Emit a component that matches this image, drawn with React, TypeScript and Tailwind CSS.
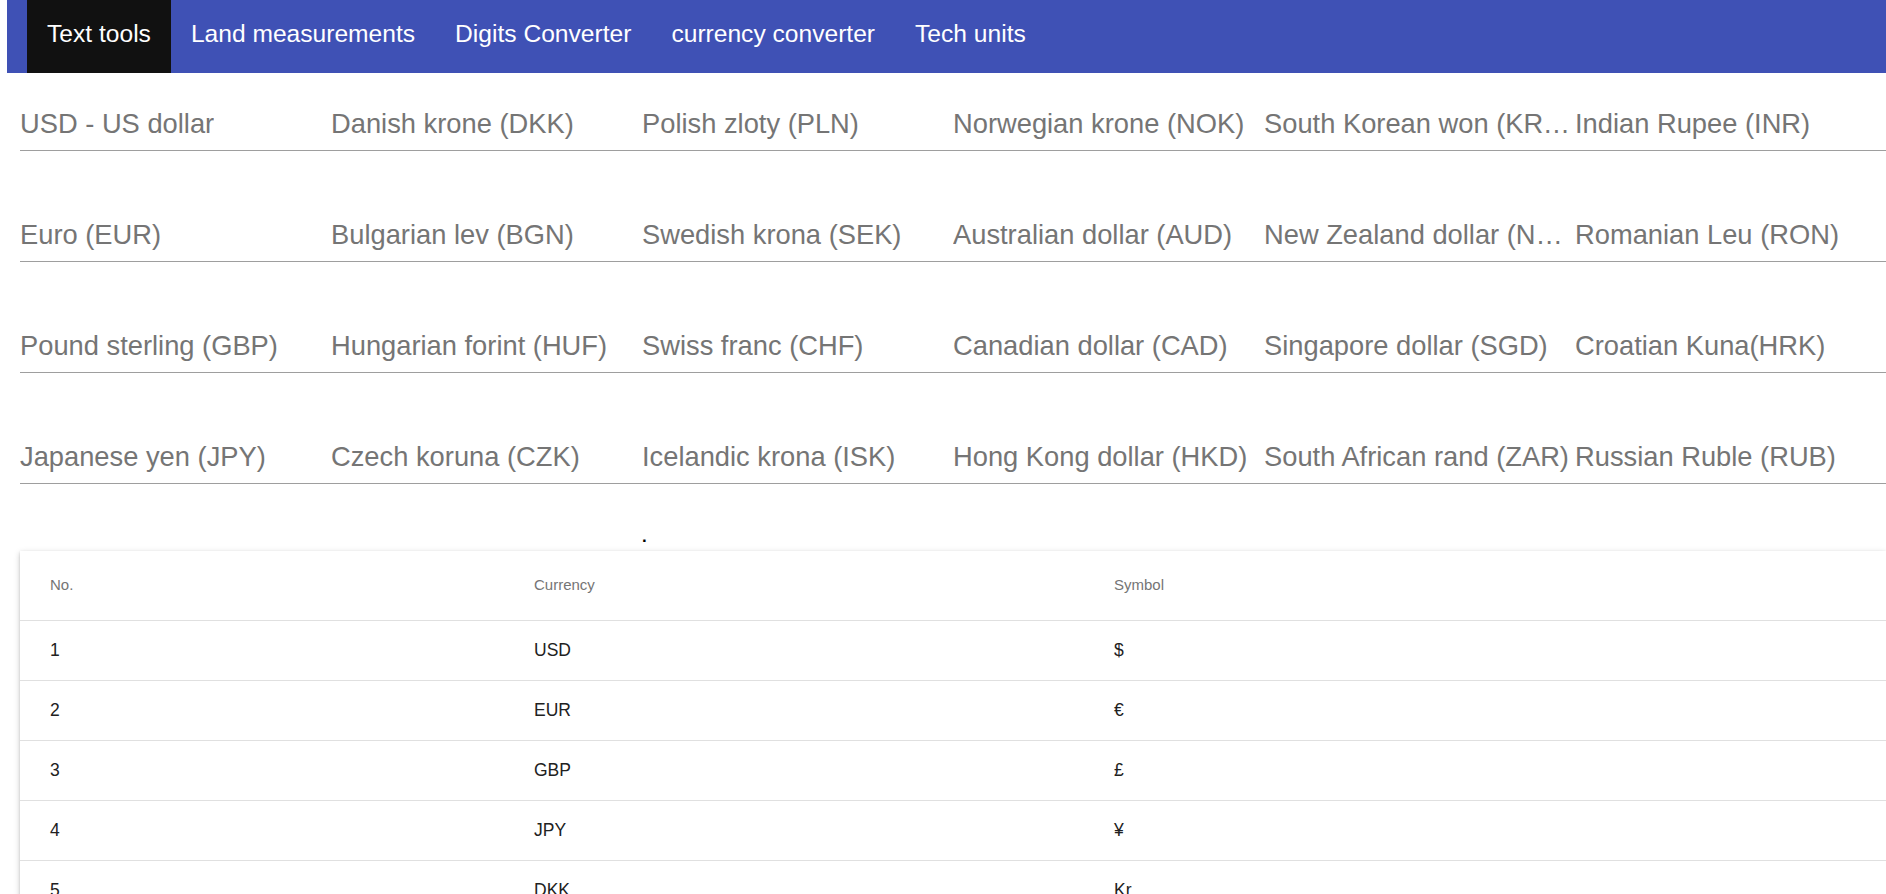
const navItems = [
  "Text tools",
  "Land measurements",
  "Digits Converter",
  "currency converter",
  "Tech units",
];

const currencyFields = [
  ["USD - US dollar", "Danish krone (DKK)", "Polish zloty (PLN)", "Norwegian krone (NOK)", "South Korean won (KRW)", "Indian Rupee (INR)"],
  ["Euro (EUR)", "Bulgarian lev (BGN)", "Swedish krona (SEK)", "Australian dollar (AUD)", "New Zealand dollar (NZD)", "Romanian Leu (RON)"],
  ["Pound sterling (GBP)", "Hungarian forint (HUF)", "Swiss franc (CHF)", "Canadian dollar (CAD)", "Singapore dollar (SGD)", "Croatian Kuna(HRK)"],
  ["Japanese yen (JPY)", "Czech koruna (CZK)", "Icelandic krona (ISK)", "Hong Kong dollar (HKD)", "South African rand (ZAR)", "Russian Ruble (RUB)"],
];

const symbols = [
  ["USD", "$"],
  ["EUR", "€"],
  ["GBP", "£"],
  ["JPY", "¥"],
  ["DKK", "Kr"],
  ["BGN", "лв"],
  ["PLN", "zł"],
  ["SEK", "kr"],
  ["NOK", "kr"],
  ["AUD", "$"],
];

export default function App() {
  return (
    <div
      className="h-screen overflow-hidden bg-white"
      style={{ fontFamily: '"Liberation Sans", Arial, sans-serif' }}
    >
      {/* top navigation */}
      <nav className="ml-[7px] h-[73px] bg-[#3f51b5] flex pl-[20px]">
        {navItems.map((item, i) => (
          <a
            key={item}
            href="#"
            className={
              "h-full px-5 pb-[4px] flex items-center text-[24.6px] text-white whitespace-nowrap " +
              (i === 0 ? "bg-[#111111]" : "")
            }
          >
            {item}
          </a>
        ))}
      </nav>

      <div className="pl-[20px]">
        {/* currency inputs */}
        <div className="pt-[23px] flex flex-col gap-[56px]">
          {currencyFields.map((row, r) => (
            <div key={r} className="grid grid-cols-6">
              {row.map((label) => (
                <div
                  key={label}
                  className="h-[55px] pt-[3px] border-b border-[#9e9e9e] flex items-center min-w-0"
                >
                  <span className="block truncate text-[27.3px] text-[#757575]">
                    {label}
                  </span>
                </div>
              ))}
            </div>
          ))}
        </div>

        <div className="mt-[43px] h-[20px] pl-[622px] text-[17px] leading-[20px] font-bold text-black">
          .
        </div>

        {/* symbols table */}
        <div className="mt-[4px] bg-white shadow-[0_2px_6px_rgba(0,0,0,0.22),0_1px_2px_rgba(0,0,0,0.12)]">
          <table className="w-full border-collapse">
            <thead>
              <tr className="h-[69px] border-b border-[#e0e0e0]">
                <th className="w-[484px] pl-[30px] text-left font-normal text-[15px] text-[#757575]">
                  No.
                </th>
                <th className="w-[580px] pl-[30px] text-left font-normal text-[15px] text-[#757575]">
                  Currency
                </th>
                <th className="pl-[30px] text-left font-normal text-[15px] text-[#757575]">
                  Symbol
                </th>
              </tr>
            </thead>
            <tbody>
              {symbols.map(([code, sym], i) => (
                <tr key={code} className="h-[60px] border-b border-[#e0e0e0]">
                  <td className="pl-[30px] text-[17.5px] text-[#212121]">{i + 1}</td>
                  <td className="pl-[30px] text-[17.5px] text-[#212121]">{code}</td>
                  <td className="pl-[30px] text-[17.5px] text-[#212121]">{sym}</td>
                </tr>
              ))}
            </tbody>
          </table>
        </div>
      </div>
    </div>
  );
}
